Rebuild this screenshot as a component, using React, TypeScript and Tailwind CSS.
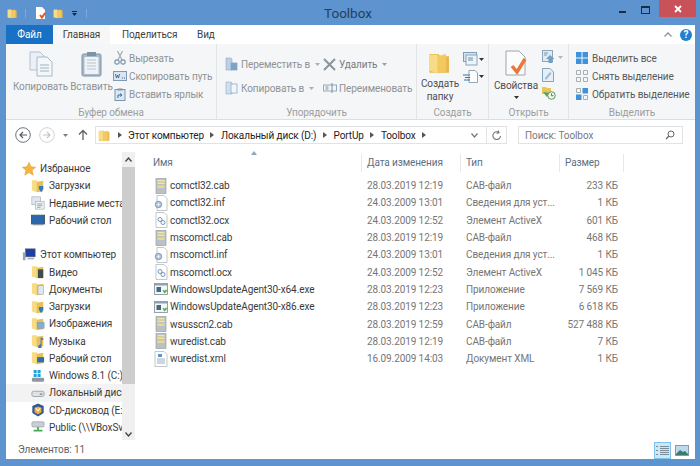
import React from "react";

const Folder = ({ size = 14, className = "" }: { size?: number; className?: string }) => (
  <svg width={size} height={size} viewBox="0 0 16 16" className={`shrink-0 ${className}`}>
    <path d="M1 2h6l1 1.500h6v11H1z" fill="#e6b84f" />
    <path d="M1 2.500h5.500v12.500L1 13z" fill="#f7dc85" />
    <path d="M6.500 3.500L12 2v11.500l-5.500 1.500z" fill="#f2c85f" />
  </svg>
);

const Overlay = ({ kind }: { kind: string }) => {
  if (kind === "down") return <path d="M9 8h5v3l-2.500 4L9 11z" fill="#2a7ec4" />;
  if (kind === "film") return <rect x="8" y="5" width="6" height="10" fill="#3f4d4a" />;
  if (kind === "doc") return <rect x="8" y="4" width="6" height="10" fill="#dfe7ee" stroke="#93a5b5" strokeWidth="0.6" />;
  if (kind === "img") return <rect x="7" y="6" width="8" height="7" fill="#7fb0d8" stroke="#8094a8" strokeWidth="0.5" />;
  if (kind === "music") return <path d="M9 13a2 2 0 1 0 3 1V6l2 1V5l-3-1v7z" fill="#3b77b0" />;
  if (kind === "desk") return <rect x="7" y="7" width="8" height="6" fill="#2f6fb0" />;
  return null;
};

const NavIcon = ({ kind }: { kind: string }) => {
  if (kind === "star")
    return (
      <svg width="14" height="14" viewBox="0 0 16 16" className="shrink-0">
        <path d="M8 .5l2.300 5 5.200.5-4 3.500 1.300 5.500L8 12l-4.800 3 1.300-5.500-4-3.500 5.200-.5z" fill="#f4b63c" stroke="#e08f2a" strokeWidth=".6" />
      </svg>
    );
  if (kind === "recent")
    return (
      <svg width="14" height="14" viewBox="0 0 16 16" className="shrink-0">
        <rect x="1" y="1" width="10" height="9" fill="#e3e8ec" stroke="#9aa7b0" strokeWidth=".7" />
        <rect x="5" y="6" width="10" height="9" fill="#f0f3f5" stroke="#9aa7b0" strokeWidth=".7" />
        <path d="M7 9h6M7 11h6M7 13h4" stroke="#6d8fa8" strokeWidth=".8" />
      </svg>
    );
  if (kind === "desktop")
    return (
      <svg width="14" height="14" viewBox="0 0 16 16" className="shrink-0">
        <rect x="0.500" y="2.500" width="15" height="10" fill="#2b67ad" stroke="#44505c" />
        <rect x="2" y="12.500" width="12" height="1.500" fill="#8a949c" />
      </svg>
    );
  if (kind === "pc")
    return (
      <svg width="14" height="14" viewBox="0 0 16 16" className="shrink-0">
        <rect x="4" y="1" width="11" height="9" fill="#1c3fa8" stroke="#556" strokeWidth=".7" />
        <rect x="1" y="5" width="3" height="9" fill="#9aa4ad" />
        <rect x="6" y="11" width="8" height="2" fill="#aab3ba" />
      </svg>
    );
  if (kind === "win")
    return (
      <svg width="14" height="14" viewBox="0 0 16 16" className="shrink-0">
        <path d="M3 1h3.500v3.500H3zM7.500 1H11v3.500H7.500zM3 5.500h3.500V9H3zM7.500 5.500H11V9H7.500z" fill="#23a2dd" />
        <rect x="1" y="10" width="14" height="4.500" rx="1.500" fill="#8e979e" />
      </svg>
    );
  if (kind === "drive")
    return (
      <svg width="14" height="14" viewBox="0 0 16 16" className="shrink-0">
        <rect x="1" y="6" width="14" height="6" rx="2" fill="#dfe3e6" stroke="#858e95" strokeWidth=".8" />
        <rect x="10" y="8.500" width="3" height="1.500" fill="#7a868e" />
      </svg>
    );
  if (kind === "cd")
    return (
      <svg width="14" height="14" viewBox="0 0 16 16" className="shrink-0">
        <path d="M8 .5l6.500 3v8L8 15.500l-6.500-4v-8z" fill="#2d5a97" />
        <path d="M8 4l4 1.500v5L8 13l-4-2.500v-5z" fill="#f1a93a" />
        <path d="M5.500 6L8 9l2.500-3" stroke="#fff" strokeWidth="1.200" fill="none" />
      </svg>
    );
  if (kind === "net")
    return (
      <svg width="14" height="14" viewBox="0 0 16 16" className="shrink-0">
        <rect x="1" y="2" width="14" height="6" rx="1.500" fill="#c9ced2" stroke="#8e979e" strokeWidth=".7" />
        <path d="M7 8h2v3h4v2H3v-2h4z" fill="#3fae4e" />
      </svg>
    );
  return (
    <span className="inline-block h-[14px] w-[14px] shrink-0">
      <svg width="14" height="14" viewBox="0 0 16 16">
        <path d="M1 1.500h6v13.500L1 13z" fill="#f7dc85" />
        <path d="M6.500 3L14 2v12l-7.500 1z" fill="#e9bf5a" />
        <Overlay kind={kind} />
      </svg>
    </span>
  );
};

const FileIcon = ({ kind }: { kind: string }) => {
  if (kind === "cab")
    return (
      <svg width="14" height="16" viewBox="0 0 14 16" className="shrink-0">
        <rect x="2" y="0.500" width="10" height="15" fill="#b9c0c6" stroke="#9aa3aa" strokeWidth=".7" />
        <rect x="3.500" y="2" width="7" height="4" fill="#f0e6b0" />
        <rect x="3.500" y="7.500" width="7" height="2.500" fill="#e8d98c" />
        <path d="M3.500 4h7" stroke="#b3a768" strokeWidth=".7" />
      </svg>
    );
  if (kind === "inf")
    return (
      <svg width="14" height="16" viewBox="0 0 14 16" className="shrink-0">
        <path d="M3 .5h7l3 3v12H3z" fill="#fff" stroke="#a7b0b7" strokeWidth=".7" />
        <circle cx="4.500" cy="9.500" r="3.200" fill="#b5c9da" stroke="#6c8aa3" strokeWidth=".8" />
        <circle cx="4.500" cy="9.500" r="1" fill="#fff" />
      </svg>
    );
  if (kind === "ocx")
    return (
      <svg width="14" height="16" viewBox="0 0 14 16" className="shrink-0">
        <path d="M2 .5h8l3 3v12H2z" fill="#fff" stroke="#a7b0b7" strokeWidth=".7" />
        <circle cx="6" cy="7.500" r="2" fill="none" stroke="#6f96b8" strokeWidth="1" />
        <circle cx="9" cy="10.500" r="2" fill="none" stroke="#6f96b8" strokeWidth="1" />
      </svg>
    );
  if (kind === "exe")
    return (
      <svg width="14" height="16" viewBox="0 0 14 16" className="shrink-0">
        <rect x="0.500" y="2.500" width="13" height="11" fill="#f4f6f7" stroke="#7f8a92" strokeWidth=".8" />
        <rect x="0.500" y="2.500" width="13" height="2" fill="#8ea3b3" />
        <rect x="2.500" y="6" width="4.500" height="5" fill="#3f6c7f" />
        <path d="M8.500 9.500l2 3 3-3-1.500-1-1.500 1.500-.8-1.200z" fill="#57ad55" />
      </svg>
    );
  return (
    <svg width="14" height="16" viewBox="0 0 14 16" className="shrink-0">
      <path d="M1 .5h9l3 3v12H1z" fill="#fff" stroke="#a7b0b7" strokeWidth=".7" />
      <rect x="4" y="3" width="4" height="3" fill="#5d94c6" />
      <path d="M3 8h8M3 10h8M3 12h8" stroke="#7d99b0" strokeWidth=".8" />
    </svg>
  );
};

const Caret = ({ className = "" }: { className?: string }) => (
  <svg width="5" height="3" viewBox="0 0 5 3" className={`shrink-0 ${className}`}>
    <path d="M0 0h5L2.500 3z" fill="currentColor" />
  </svg>
);

const Crumb = ({ children }: { children?: React.ReactNode }) => (
  <>
    <svg width="4" height="6" viewBox="0 0 4 6" className="mx-[6.500px] shrink-0">
      <path d="M0 0l4 3-4 3z" fill="#555" />
    </svg>
    {children && <span className="whitespace-nowrap">{children}</span>}
  </>
);

const GroupLabel = ({ children }: { children: React.ReactNode }) => (
  <div className="h-[15px] text-center leading-[17px] text-[#9b9ea1]">{children}</div>
);

const SmallIcon = ({ kind }: { kind: string }) => {
  switch (kind) {
    case "cut":
      return (
        <svg width="12" height="14" viewBox="0 0 12 14">
          <path d="M3.500 0L8 9M8.500 0L4 9" stroke="#a8b0b8" strokeWidth="1.300" />
          <circle cx="3" cy="11" r="2.200" fill="none" stroke="#7f95aa" strokeWidth="1.200" />
          <circle cx="9" cy="11" r="2.200" fill="none" stroke="#7f95aa" strokeWidth="1.200" />
        </svg>
      );
    case "path":
      return (
        <svg width="14" height="10" viewBox="0 0 14 10">
          <rect x=".5" y=".5" width="13" height="9" fill="#d8e6f2" stroke="#7e9ab4" />
          <path d="M2.500 3l1 4 1-3 1 3 1-4" stroke="#44688a" strokeWidth=".9" fill="none" />
          <path d="M9 7h1M11 7h1" stroke="#44688a" />
        </svg>
      );
    case "link":
      return (
        <svg width="12" height="13" viewBox="0 0 12 13">
          <rect x="1" y="1.500" width="10" height="11" fill="#dce7f1" stroke="#7e94a8" />
          <rect x="3.500" y="0.500" width="5" height="2" fill="#7e94a8" />
          <path d="M4 10V7h3.500M6 5.500L8 7 6 8.500" stroke="#2f70ac" fill="none" />
        </svg>
      );
    case "move":
    case "copyto":
      return (
        <svg width="13" height="14" viewBox="0 0 13 14">
          <path d="M1 1h5l1 1v11H1z" fill={kind === "move" ? "#bcd0e3" : "#cfe0ee"} stroke="#93a9bd" strokeWidth=".6" />
          <rect x="6" y={kind === "move" ? 6 : 3} width="6" height={kind === "move" ? 7 : 9} fill={kind === "move" ? "#7fa3c6" : "#f3f6f9"} stroke="#7fa3c6" strokeWidth=".7" />
        </svg>
      );
    case "del":
      return (
        <svg width="13" height="13" viewBox="0 0 13 13">
          <path d="M1 1l11 11M12 1L1 12" stroke="#8a949c" strokeWidth="2" />
        </svg>
      );
    case "rename":
      return (
        <svg width="14" height="10" viewBox="0 0 14 10">
          <rect x=".5" y="2" width="13" height="6" fill="#f2f5f8" stroke="#98a8b6" />
          <path d="M2.500 4h3M2.500 6h3M9 0v10" stroke="#7790a6" />
        </svg>
      );
    case "newitem":
      return (
        <svg width="15" height="14" viewBox="0 0 15 14">
          <rect x=".5" y=".5" width="13" height="9" fill="#d7e4f0" stroke="#7f9cb7" />
          <rect x="3" y="3" width="11" height="10" fill="#eef3f7" stroke="#8ba4ba" />
          <path d="M5 6h5M5 8h5" stroke="#5b8fbd" />
        </svg>
      );
    case "easy":
      return (
        <svg width="15" height="13" viewBox="0 0 15 13">
          <path d="M6 .5h6l2.500 2.500v9.500H6z" fill="#fff" stroke="#7c8f9f" strokeWidth=".8" />
          <path d="M0 5h7M2 7.500h5M1 10h6" stroke="#2d76b9" strokeWidth="1.100" />
        </svg>
      );
    case "openitem":
      return (
        <svg width="13" height="14" viewBox="0 0 13 14">
          <rect x=".5" y=".5" width="10" height="11" fill="#dfe9f2" stroke="#8ea5b9" />
          <path d="M2 3h4M2 5h3" stroke="#7d97ad" />
          <path d="M8 5l4.500 4H10.500v4h-4V9H4z" fill="#6f9fca" />
        </svg>
      );
    case "edit":
      return (
        <svg width="12" height="14" viewBox="0 0 12 14">
          <path d="M.5.5H8l3.500 3.500v9.500H.5z" fill="#e6eff7" stroke="#87a2ba" />
          <path d="M3 10l5-6 1.500 1.500-5 6H3z" fill="#9dbcd8" />
        </svg>
      );
    case "history":
      return (
        <svg width="14" height="14" viewBox="0 0 14 14">
          <path d="M0 1h4l1 1h4v6H0z" fill="#e8c65b" />
          <path d="M1 6l4 5 3-4z" fill="#4fa64a" />
          <circle cx="9.500" cy="9.500" r="3.800" fill="#eef3ee" stroke="#5f9a61" />
          <path d="M9.500 7.500v2.200h2" stroke="#c0504d" fill="none" />
        </svg>
      );
    case "all":
      return (
        <svg width="12" height="12" viewBox="0 0 12 12">
          <path d="M0 0h5.500v5.500H0zM6.500 0H12v5.500H6.500zM0 6.500h5.500V12H0zM6.500 6.500H12V12H6.500z" fill="#3f91dc" />
        </svg>
      );
    case "none":
      return (
        <svg width="12" height="12" viewBox="0 0 12 12" fill="none" stroke="#a8adb1">
          <path d="M.5.5h4v4h-4zM7.500.5h4v4h-4zM.5 7.500h4v4h-4zM7.500 7.500h4v4h-4z" />
        </svg>
      );
    default:
      return (
        <svg width="12" height="12" viewBox="0 0 12 12">
          <path d="M0 6.500h5.500V12H0zM6.500 0H12v5.500H6.500z" fill="#3f91dc" />
          <path d="M.5.5h4v4h-4zM7.500 7.500h4v4h-4z" fill="none" stroke="#a8adb1" />
        </svg>
      );
  }
};

const RibbonRow = ({ icon, label, color = "text-[#8e9296]", caret, w = "w-[17px]", gap = "ml-[1px]" }: { icon: string; label: string; color?: string; caret?: boolean; w?: string; gap?: string }) => (
  <div className={`flex h-[18px] shrink-0 items-center ${color}`}>
    <span className={`flex shrink-0 justify-center ${w}`}>
      <SmallIcon kind={icon} />
    </span>
    <span className={`whitespace-nowrap ${gap}`}>{label}</span>
    {caret && <Caret className="ml-[5px] opacity-70" />}
  </div>
);

const navTop = [
  { icon: "down", label: "Загрузки" },
  { icon: "recent", label: "Недавние места" },
  { icon: "desktop", label: "Рабочий стол" },
];
const navPc = [
  { icon: "film", label: "Видео" },
  { icon: "doc", label: "Документы" },
  { icon: "down", label: "Загрузки" },
  { icon: "img", label: "Изображения" },
  { icon: "music", label: "Музыка" },
  { icon: "desk", label: "Рабочий стол" },
  { icon: "win", label: "Windows 8.1 (C:)" },
  { icon: "drive", label: "Локальный диск (D:)", active: true },
  { icon: "cd", label: "CD-дисковод (E:)" },
  { icon: "net", label: "Public (\\\\VBoxSvr)" },
];

const files = [
  ["cab", "comctl32.cab", "28.03.2019 12:19", "CAB-файл", "233 КБ"],
  ["inf", "comctl32.inf", "24.03.2009 13:01", "Сведения для уст...", "1 КБ"],
  ["ocx", "comctl32.ocx", "24.03.2009 12:52", "Элемент ActiveX", "601 КБ"],
  ["cab", "mscomctl.cab", "28.03.2019 12:19", "CAB-файл", "468 КБ"],
  ["inf", "mscomctl.inf", "24.03.2009 13:01", "Сведения для уст...", "1 КБ"],
  ["ocx", "mscomctl.ocx", "24.03.2009 12:52", "Элемент ActiveX", "1 045 КБ"],
  ["exe", "WindowsUpdateAgent30-x64.exe", "28.03.2019 12:23", "Приложение", "7 569 КБ"],
  ["exe", "WindowsUpdateAgent30-x86.exe", "28.03.2019 12:23", "Приложение", "6 618 КБ"],
  ["cab", "wsusscn2.cab", "28.03.2019 12:59", "CAB-файл", "527 488 КБ"],
  ["cab", "wuredist.cab", "28.03.2019 12:19", "CAB-файл", "7 КБ"],
  ["xml", "wuredist.xml", "16.09.2009 14:03", "Документ XML", "1 КБ"],
];

export default function App() {
  return (
    <div className="flex h-[466px] w-[700px] flex-col overflow-hidden bg-[#5d93ce] pr-[5px] pb-[7px] pl-[6px] font-['Roboto',sans-serif] text-[10px] tracking-[-0.1px] text-[#3f3f3f]">
      {/* title bar */}
      <div className="-ml-[6px] -mr-[5px] flex h-[25px] shrink-0 items-start">
        <div className="ml-[7px] mt-[7px] flex w-[300px] items-center">
          <Folder size={11} />
          <div className="ml-[7px] mr-[9px] h-[9px] w-px bg-[#7da8d8]" />
          <svg width="11" height="12" viewBox="0 0 11 12" className="shrink-0">
            <path d="M1 0h6l3 3v9H1z" fill="#fff" />
            <path d="M5 8l2 2.500L10 6" stroke="#e0562c" strokeWidth="2" fill="none" />
          </svg>
          <Folder size={11} className="ml-[7px]" />
          <div className="ml-[8px] flex flex-col items-center">
            <div className="mb-[1px] h-px w-[5px] bg-[#1b2733]" />
            <Caret className="text-[#1b2733]" />
          </div>
          <div className="ml-[9px] h-[9px] w-px bg-[#7da8d8]" />
        </div>
        <div className="ml-[5px] w-[72px] pt-[2px] text-center text-[13.500px] leading-[22px] tracking-normal text-[#24405f]">Toolbox</div>
        <div className="ml-auto flex h-[17px] items-start">
          <div className="mr-[15px] mt-[11px] h-[2px] w-[7px] bg-[#1e2c3b]" />
          <div className="mr-[9px] mt-[6px] h-[8px] w-[9px] border border-t-2 border-[#1e2c3b]" />
          <div className="flex h-[17px] w-[37px] items-center justify-center bg-[#c9525a]">
            <svg width="8" height="8" viewBox="0 0 8 8">
              <path d="M1 1l6 6M7 1L1 7" stroke="#fff" strokeWidth="1.800" />
            </svg>
          </div>
          <div className="w-[4px]" />
        </div>
      </div>

      {/* tabs */}
      <div className="flex h-[19px] shrink-0 items-center bg-white">
        <div className="flex h-full w-[47px] items-center justify-center bg-[#1971c5] text-white">Файл</div>
        <div className="flex h-full w-[57px] items-center justify-center bg-[#f6f7f8]">Главная</div>
        <div className="ml-[12px] w-[53px] whitespace-nowrap">Поделиться</div>
        <div className="ml-[22px]">Вид</div>
        <div className="ml-auto flex items-center">
          <svg width="8" height="5" viewBox="0 0 8 5" className="mr-[8px]">
            <path d="M.5 4.500L4 1l3.500 3.500" stroke="#8d9298" strokeWidth="1.300" fill="none" />
          </svg>
          <div className="mr-[3px] flex h-[12px] w-[12px] items-center justify-center rounded-full bg-[#1f7fd1] text-[10px] font-bold leading-none text-white">?</div>
        </div>
      </div>

      {/* ribbon */}
      <div className="flex h-[76px] shrink-0 border-b border-[#dcdfe2] bg-[#f5f6f7] text-[#8e9296]">
        <div className="flex w-[211px] shrink-0 flex-col border-r border-[#e2e4e6]">
          <div className="flex h-[60px] pt-[5px]">
            <div className="ml-[8px] flex w-[53px] flex-col items-center pt-[2px]">
              <svg width="24" height="26" viewBox="0 0 24 26">
                <path d="M1 1h10l4 4v14H1z" fill="#eaf0f6" stroke="#b3c0cd" />
                <path d="M8 6h10l5 5v14H8z" fill="#f4f7fa" stroke="#a9b8c6" />
                <path d="M11 14h9M11 17h9M11 20h9" stroke="#9db1c3" />
              </svg>
              <span className="mt-[2px] whitespace-nowrap leading-[15px]">Копировать</span>
            </div>
            <div className="ml-[5px] flex w-[39px] flex-col items-center pt-[2px]">
              <svg width="21" height="26" viewBox="0 0 21 26">
                <rect x="1" y="3" width="19" height="22" rx="1.500" fill="#a9b9c8" stroke="#7e93a6" />
                <rect x="3.500" y="6" width="14" height="17" fill="#eff3f7" />
                <path d="M6 9h9M6 12h9M6 15h9M6 18h9" stroke="#b7c5d2" />
                <rect x="6" y="1" width="9" height="4" fill="#7e93a6" />
              </svg>
              <span className="mt-[2px] whitespace-nowrap leading-[15px]">Вставить</span>
            </div>
            <div className="flex flex-col">
              <RibbonRow icon="cut" label="Вырезать" />
              <RibbonRow icon="path" label="Скопировать путь" />
              <RibbonRow icon="link" label="Вставить ярлык" />
            </div>
          </div>
          <GroupLabel>Буфер обмена</GroupLabel>
        </div>

        <div className="flex w-[200px] shrink-0 flex-col border-r border-[#e2e4e6]">
          <div className="flex h-[60px] pt-[11px]">
            <div className="ml-[6px] flex w-[98px] flex-col gap-[6px]">
              <RibbonRow icon="move" label="Переместить в" caret />
              <RibbonRow icon="copyto" label="Копировать в" caret />
            </div>
            <div className="flex flex-col gap-[6px]">
              <RibbonRow icon="del" label="Удалить" caret color="text-[#777b7f]" />
              <RibbonRow icon="rename" label="Переименовать" />
            </div>
          </div>
          <GroupLabel>Упорядочить</GroupLabel>
        </div>

        <div className="flex w-[72px] shrink-0 flex-col border-r border-[#e2e4e6]">
          <div className="flex h-[60px] pt-[7px]">
            <div className="ml-[2px] flex w-[42px] flex-col items-center text-[#4b4f53]">
              <Folder size={24} />
              <span className="mt-[3px] text-center leading-[12.500px]">Создать папку</span>
            </div>
            <div className="ml-[2px] mt-[1px] flex flex-col gap-[4px]">
              <div className="flex items-center gap-[1px] text-[#333]">
                <SmallIcon kind="newitem" />
                <Caret />
              </div>
              <div className="flex items-center gap-[1px] text-[#333]">
                <SmallIcon kind="easy" />
                <Caret />
              </div>
            </div>
          </div>
          <GroupLabel>Создать</GroupLabel>
        </div>

        <div className="flex w-[80px] shrink-0 flex-col border-r border-[#e2e4e6]">
          <div className="flex h-[60px] pt-[5px]">
            <div className="ml-[4px] flex w-[46px] flex-col items-center pt-[1px] text-[#4b4f53]">
              <svg width="24" height="27" viewBox="0 0 24 27">
                <path d="M2 1h13l6 6v18H2z" fill="#fcfcfc" stroke="#9ca6ae" />
                <path d="M8 16l5 6 8-13" stroke="#e9793a" strokeWidth="3.500" fill="none" />
              </svg>
              <span className="mt-[1px] whitespace-nowrap leading-[15px]">Свойства</span>
              <Caret className="mt-[3px] text-[#333]" />
            </div>
            <div className="ml-[3px] flex flex-col gap-[4px] pt-[1px]">
              <div className="flex items-center gap-[3px] text-[#b3b7bb]">
                <SmallIcon kind="openitem" />
                <Caret />
              </div>
              <SmallIcon kind="edit" />
              <SmallIcon kind="history" />
            </div>
          </div>
          <GroupLabel>Открыть</GroupLabel>
        </div>

        <div className="flex min-w-0 flex-1 flex-col">
          <div className="flex h-[60px] flex-col pt-[5px] pl-[7px]">
            <RibbonRow icon="all" label="Выделить все" color="text-[#55595d]" w="w-[12px]" gap="ml-[4px]" />
            <RibbonRow icon="none" label="Снять выделение" color="text-[#55595d]" w="w-[12px]" gap="ml-[4px]" />
            <RibbonRow icon="invert" label="Обратить выделение" color="text-[#55595d]" w="w-[12px]" gap="ml-[4px]" />
          </div>
          <GroupLabel>Выделить</GroupLabel>
        </div>
      </div>

      {/* address bar */}
      <div className="flex h-[30px] shrink-0 items-center bg-white">
        <svg width="16" height="16" viewBox="0 0 16 16" className="ml-[9px] shrink-0">
          <circle cx="8" cy="8" r="7.300" fill="none" stroke="#6f7276" />
          <path d="M12 8H5M8 5L5 8l3 3" stroke="#5a5d60" strokeWidth="1.200" fill="none" />
        </svg>
        <svg width="16" height="16" viewBox="0 0 16 16" className="ml-[8px] shrink-0">
          <circle cx="8" cy="8" r="7.300" fill="none" stroke="#d0d3d6" />
          <path d="M4 8h7M8 5l3 3-3 3" stroke="#c3c6c9" strokeWidth="1.200" fill="none" />
        </svg>
        <Caret className="ml-[8px] text-[#7a7d80]" />
        <svg width="10" height="12" viewBox="0 0 10 12" className="ml-[10px] shrink-0">
          <path d="M5 11V1.500M1 5.500l4-4 4 4" stroke="#5d6064" strokeWidth="1.300" fill="none" />
        </svg>
        <div className="ml-[7px] flex h-[18px] w-[412px] shrink-0 items-center border border-[#e1e3e5] text-[#222]">
          <Folder size={13} className="ml-[2px]" />
          <Crumb>Этот компьютер</Crumb>
          <Crumb>Локальный диск (D:)</Crumb>
          <Crumb>PortUp</Crumb>
          <Crumb>Toolbox</Crumb>
          <Crumb />
          <div className="ml-auto flex h-full items-center">
            <svg width="7" height="5" viewBox="0 0 7 5" className="mr-[8px]">
              <path d="M.5.500L3.500 4 6.500.500" stroke="#777" strokeWidth="1.200" fill="none" />
            </svg>
            <div className="flex h-full w-[20px] items-center justify-center border-l border-[#e1e3e5]">
              <svg width="10" height="11" viewBox="0 0 10 11">
                <path d="M8.500 6a3.800 3.800 0 1 1-2-3.700M6 .5l1 2.200-2.200.8" stroke="#777" strokeWidth="1.100" fill="none" />
              </svg>
            </div>
          </div>
        </div>
        <div className="ml-[11px] flex h-[18px] w-[165px] shrink-0 items-center border border-[#e1e3e5] pl-[6px] text-[#77797c]">
          Поиск: Toolbox
          <svg width="10" height="10" viewBox="0 0 10 10" className="ml-auto mr-[7px]">
            <circle cx="6" cy="4" r="3" fill="none" stroke="#666" />
            <path d="M4 6L1 9" stroke="#666" strokeWidth="1.300" />
          </svg>
        </div>
      </div>

      {/* body */}
      <div className="flex min-h-0 flex-1 bg-white">
        <div className="flex w-[129px] shrink-0 pt-[2px]">
          <div className="w-[116px] overflow-hidden whitespace-nowrap pt-[8px] text-[#3a3a3a]">
            <div className="flex h-[17.250px] items-center pl-[16px]">
              <NavIcon kind="star" />
              <span className="ml-[4px]">Избранное</span>
            </div>
            {navTop.map((n) => (
              <div key={n.label} className="flex h-[17.250px] items-center pl-[25px]">
                <NavIcon kind={n.icon} />
                <span className="ml-[4px]">{n.label}</span>
              </div>
            ))}
            <div className="mt-[17.250px] flex h-[17.250px] items-center pl-[16px]">
              <NavIcon kind="pc" />
              <span className="ml-[4px]">Этот компьютер</span>
            </div>
            {navPc.map((n) => (
              <div key={n.label + n.icon} className={`flex h-[17.250px] items-center pl-[25px] ${n.active ? "bg-[#f3f3f3]" : ""}`}>
                <NavIcon kind={n.icon} />
                <span className="ml-[4px]">{n.label}</span>
              </div>
            ))}
          </div>
          <div className="flex w-[13px] shrink-0 flex-col items-center bg-[#f0f0f0]">
            <svg width="7" height="5" viewBox="0 0 7 5" className="mt-[5px] mb-[5px]">
              <path d="M.5 4.500L3.500 1l3 3.500" stroke="#444" strokeWidth="1.300" fill="none" />
            </svg>
            <div className="h-[217px] w-full bg-[#cdcdcd]" />
            <svg width="7" height="5" viewBox="0 0 7 5" className="mt-[48px]">
              <path d="M.5.500L3.500 4l3-3.500" stroke="#444" strokeWidth="1.300" fill="none" />
            </svg>
          </div>
        </div>

        <div className="flex min-w-0 flex-1 flex-col">
          <div className="relative flex h-[25px] shrink-0 items-center text-[#5c6f82]">
            <span className="w-[226px] pl-[18px]">Имя</span>
            <span className="w-[99px] border-l border-[#e6e8ea] pl-[5px] leading-[18px]">Дата изменения</span>
            <span className="w-[99px] border-l border-[#e6e8ea] pl-[5px] leading-[18px]">Тип</span>
            <span className="w-[65px] border-l border-r border-[#e6e8ea] pl-[5px] leading-[18px]">Размер</span>
            <svg width="6" height="4" viewBox="0 0 6 4" className="absolute left-[116px] top-[1px]">
              <path d="M0 4l3-4 3 4z" fill="#8ba6bf" />
            </svg>
          </div>
          <div className="pt-[2px]">
            {files.map((f) => (
              <div key={f[1]} className="flex h-[17.300px] items-center">
                <span className="flex w-[226px] items-center pl-[19px] whitespace-nowrap text-[#3a3a3a]">
                  <FileIcon kind={f[0]} />
                  <span className="ml-[2px]">{f[1]}</span>
                </span>
                <span className="w-[99px] pl-[6px] whitespace-nowrap text-[#767676]">{f[2]}</span>
                <span className="w-[99px] pl-[6px] whitespace-nowrap text-[#767676]">{f[3]}</span>
                <span className="w-[59px] text-right whitespace-nowrap text-[#767676]">{f[4]}</span>
              </div>
            ))}
          </div>
        </div>
      </div>

      {/* status bar */}
      <div className="flex h-[19px] shrink-0 items-center bg-white pl-[12px] text-[#5f6367]">
        <span>Элементов: 11</span>
        <div className="ml-auto mr-[5px] flex items-end self-end">
          <div className="flex h-[17px] w-[17px] items-center justify-center border border-[#7fc4ec] bg-[#cbe8f8]">
            <svg width="13" height="11" viewBox="0 0 13 11" stroke="#7a8a96">
              <path d="M0 1.500h2M0 5.500h2M0 9.500h2M4 1.500h9M4 3.500h9M4 5.500h9M4 7.500h9M4 9.500h9" />
            </svg>
          </div>
          <div className="ml-[4px] mr-[1px] flex h-[17px] w-[14px] items-center justify-center">
            <svg width="14" height="11" viewBox="0 0 14 11">
              <rect x=".5" y=".5" width="13" height="10" fill="#bcd9ee" stroke="#8a9aa6" />
              <path d="M1 9l4-4 3 2 2-1 3 3v1H1z" fill="#3c7a6a" />
            </svg>
          </div>
        </div>
      </div>
    </div>
  );
}
